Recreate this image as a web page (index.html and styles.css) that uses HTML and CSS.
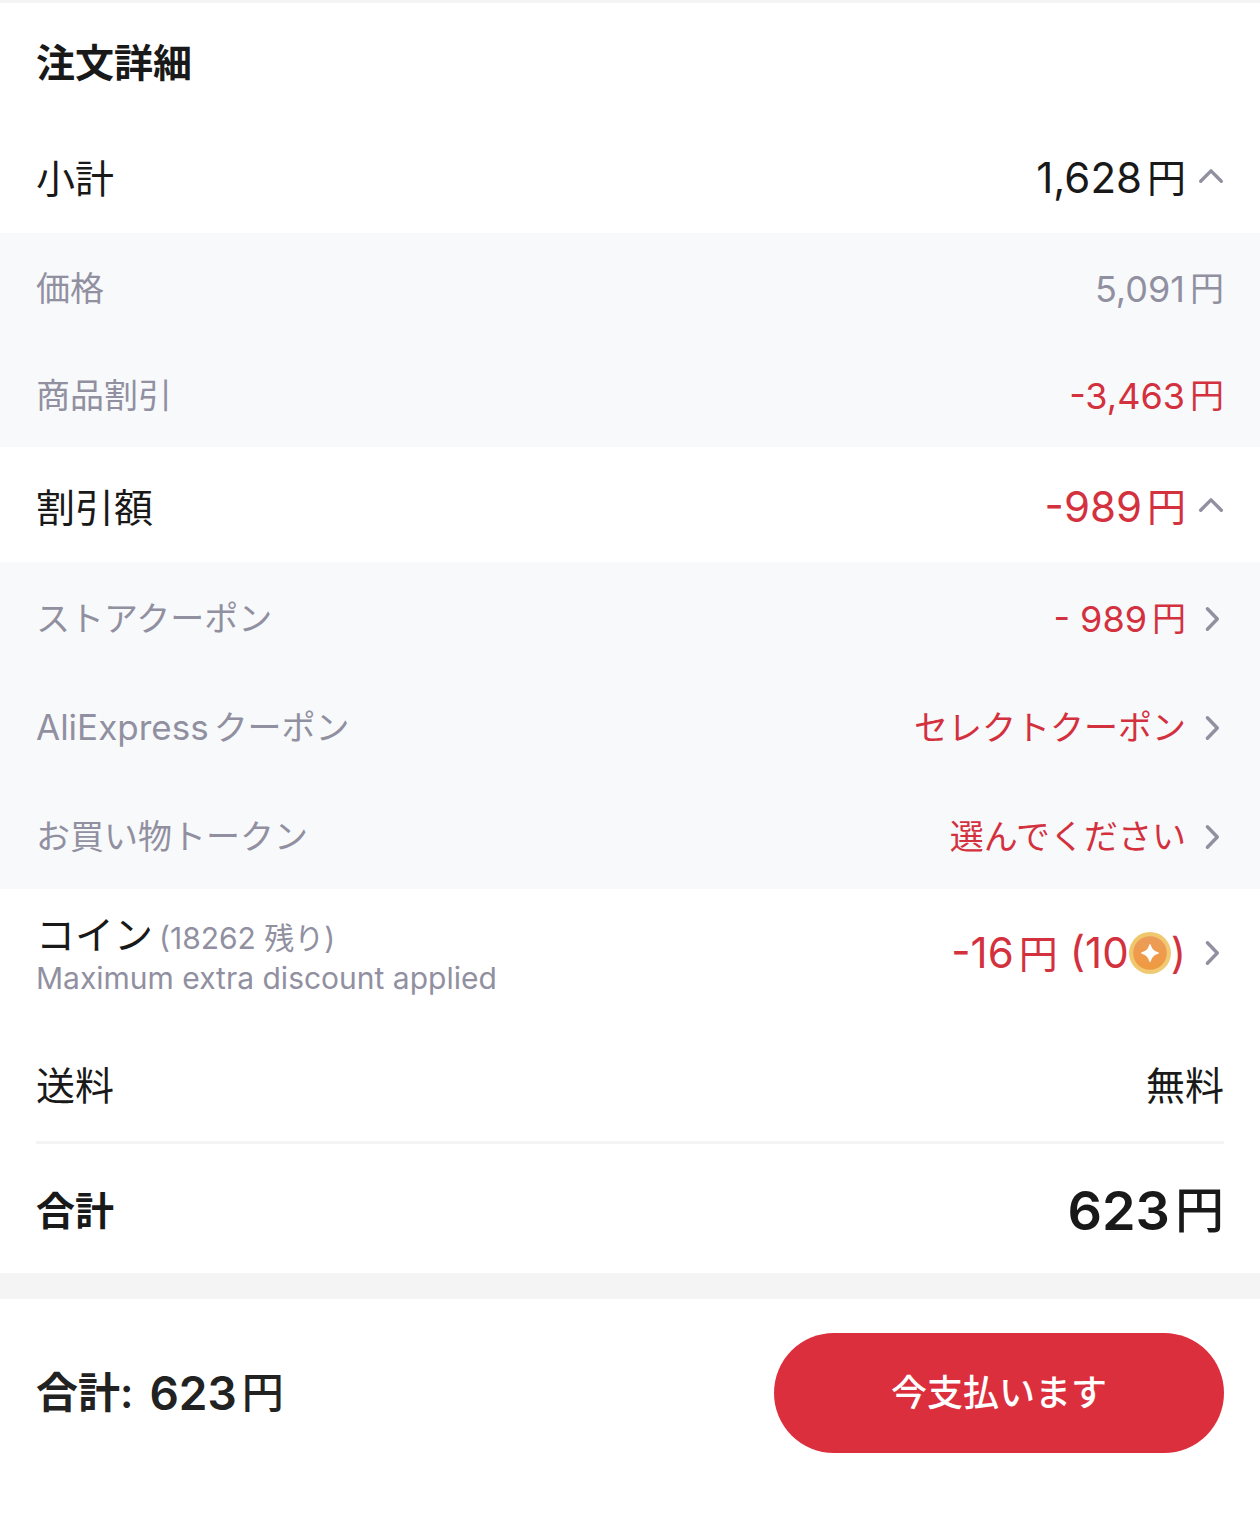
FILE: index.html
```html
<!DOCTYPE html>
<html lang="ja">
<head>
<meta charset="utf-8">
<meta name="viewport" content="width=device-width, initial-scale=1">
<title>注文詳細</title>
<link rel="stylesheet" href="styles.css">
</head>
<body>
<svg class="sprite" aria-hidden="true">
  <symbol id="up" viewBox="0 0 26 26"><path stroke-width="3.4" d="M2.700 18.200 13 7.900 23.300 18.200"/></symbol>
  <symbol id="right" viewBox="0 0 26 26"><path stroke-width="3.4" d="M9.400 2.700 19.300 13 9.400 23.300"/></symbol>
</svg>
<main class="order">
  <h1 class="title">注文詳細</h1>
  <section>
    <div class="row main-row">
      <span class="label">小計</span>
      <button class="value" type="button"><span class="amount"><span class="num">1,628</span><span>円</span></span><svg class="icon"><use href="#up"/></svg></button>
    </div>
    <div class="details">
      <div class="row price-row"><span>価格</span><span class="amount"><span class="num">5,091</span><span>円</span></span></div>
      <div class="row price-row"><span>商品割引</span><span class="amount red"><span class="num">-3,463</span><span>円</span></span></div>
    </div>
  </section>
  <section>
    <div class="row main-row">
      <span class="label">割引額</span>
      <button class="value red" type="button"><span class="amount"><span class="num">-989</span><span>円</span></span><svg class="icon"><use href="#up"/></svg></button>
    </div>
    <div class="details">
      <div class="row coupon-row"><span>ストアクーポン</span><button class="value red" type="button"><span class="amount"><span class="num">- 989</span><span>円</span></span><svg class="icon"><use href="#right"/></svg></button></div>
      <div class="row coupon-row"><span class="amount"><span class="latin">AliExpress</span><span>クーポン</span></span><button class="value red" type="button"><span>セレクトクーポン</span><svg class="icon"><use href="#right"/></svg></button></div>
      <div class="row coupon-row"><span>お買い物トークン</span><button class="value red" type="button"><span>選んでください</span><svg class="icon"><use href="#right"/></svg></button></div>
    </div>
  </section>
  <div class="row coin-row">
    <div class="coin-info">
      <p class="coin-title">コイン<span class="balance">(18262 残り)</span></p>
      <p class="coin-note">Maximum extra discount applied</p>
    </div>
    <button class="value red" type="button"><span class="amount"><span class="num">-16</span><span>円</span></span><span class="coins num">(10<svg class="coin" viewBox="0 0 42 42"><defs><linearGradient id="rim" x2="1" y2="1"><stop stop-color="#efc567"/><stop offset="1" stop-color="#f0cb78"/></linearGradient><linearGradient id="face" x2="0" y2="1"><stop stop-color="#ec9c5b"/><stop offset="1" stop-color="#f09a3f"/></linearGradient></defs><circle cx="21" cy="21" r="21" fill="url(#rim)"/><circle cx="21" cy="21" r="16.800" fill="url(#face)"/><path fill="#fff" d="M21 12Q21.600 12 22 13.500Q23.500 18.500 28.500 20Q30 20.500 30 21Q30 21.500 28.500 22Q23.500 23.500 22 28.500Q21.600 30 21 30Q20.400 30 20 28.500Q18.500 23.500 13.500 22Q12 21.500 12 21Q12 20.500 13.500 20Q18.500 18.500 20 13.500Q20.400 12 21 12Z"/></svg>)</span><svg class="icon"><use href="#right"/></svg></button>
  </div>
  <div class="row shipping-row"><span>送料</span><span>無料</span></div>
  <div class="row total-row"><span>合計</span><span class="amount grand"><span class="num">623</span><span>円</span></span></div>
</main>
<footer class="checkout">
  <p class="checkout-total">合計: <span class="amount"><span class="num">623</span><span>円</span></span></p>
  <button class="pay" type="button">今支払います</button>
</footer>
</body>
</html>
```
FILE: styles.css
```css
* { box-sizing: border-box; }
body { margin: 0; background: #fff; color: #191919; font-family: Inter, "Noto Sans CJK JP", sans-serif; font-size: 39px; line-height: 1; }
h1, p { margin: 0; }
button { border: 0; padding: 0; background: none; color: inherit; font: inherit; cursor: pointer; }
.sprite { position: absolute; width: 0; height: 0; }
.order { border-top: 3px solid #f4f4f4; border-bottom: 26px solid #f4f4f4; }
.title { padding: 40px 36px 35px; font-size: 39px; line-height: 40px; }
.row { display: flex; align-items: center; justify-content: space-between; padding: 0 36px; }
.main-row { height: 115px; }
.main-row .label { padding-top: 5px; }
.main-row .amount { padding-top: 4px; }
.num { font-size: 42px; }
.amount { display: inline-flex; align-items: center; gap: 5px; }
.value { display: flex; align-items: center; gap: 12px; }
.icon { width: 26px; height: 26px; fill: none; stroke: #9190a1; stroke-linecap: round; stroke-linejoin: round; }
.details { background: #f8f9fb; color: #9190a1; font-size: 34px; }
.details .num { font-size: 36px; }
.latin { font-size: 35px; }
.details .row { padding-top: 4px; }
.price-row { height: 107px; }
.coupon-row { height: 109px; }
.red, .details .red { color: #d3313e; }
.coin-row { height: 128px; }
.coin-info { padding-top: 4px; }
.coin-title { display: flex; align-items: baseline; gap: 6px; line-height: 44px; }
.balance, .coin-note { color: #9190a1; font-size: 30px; line-height: 40px; }
.coins { display: flex; align-items: center; }
.coin { width: 42px; height: 42px; }
.shipping-row { height: 127px; margin: 0 36px; padding: 12px 0 0; border-bottom: 3px solid #f4f4f4; }
.total-row { height: 129px; padding-top: 4px; font-weight: 600; }
.grand { font-size: 49px; font-weight: 500; }
.grand .num { font-size: 54px; font-weight: 600; }
.checkout { display: flex; align-items: center; justify-content: space-between; padding: 34px 36px 66px; }
.checkout-total { display: flex; align-items: center; gap: 16px; color: #222; font-size: 42px; font-weight: 600; }
.checkout-total .amount { font-weight: 500; }
.checkout-total .num { font-size: 46px; font-weight: 600; }
.pay { padding: 42px 117px; border-radius: 60px; background: #dc2f3d; color: #fff; font-size: 36px; font-weight: 500; }
```
